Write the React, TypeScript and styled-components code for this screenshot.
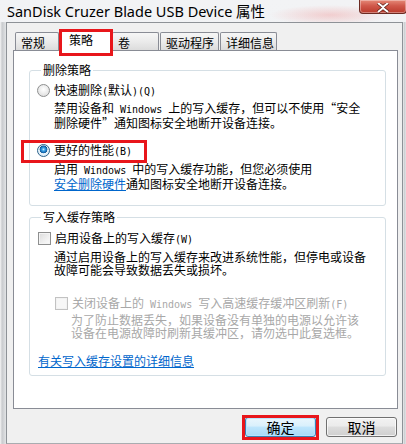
import styled, { createGlobalStyle, css } from 'styled-components';

const GlobalStyle = createGlobalStyle`
  html, body {
    margin: 0;
    padding: 0;
    width: 406px;
    height: 444px;
    overflow: hidden;
    background: #eef0f2;
  }
`;

const CJK = `"Noto Sans CJK SC", "Noto Sans", sans-serif`;

const Window = styled.div`
  width: 406px;
  height: 444px;
  display: flex;
  flex-direction: column;
  background: radial-gradient(ellipse 60px 10px at 330px 15px, rgba(240, 160, 160, 0.45), transparent),
    linear-gradient(180deg, #f2f3f5 0%, #e9ecef 100%);
  overflow: hidden;
  font-family: ${CJK};
`;

const TitleBar = styled.div`
  height: 22px;
  display: flex;
  justify-content: space-between;
  align-items: flex-start;
`;

const Title = styled.div`
  font-family: "Noto Sans", "Noto Sans CJK SC", sans-serif;
  font-size: 14.5px;
  line-height: 20px;
  padding: 1px 0 0 7px;
  color: #000;
  white-space: nowrap;
`;

const CloseButton = styled.div`
  width: 46px;
  height: 13px;
  margin-right: -1px;
  border: 1px solid #6b2a22;
  border-top: none;
  border-radius: 0 0 4px 4px;
  background: linear-gradient(180deg, #e58a78 0%, #d0584a 45%, #b93a2c 100%);
  display: flex;
  align-items: flex-end;
  justify-content: center;
  box-shadow: inset 0 0 0 1px rgba(255, 255, 255, 0.35);
`;

const Frame = styled.div`
  flex: 1;
  display: flex;
`;

const Edge = styled.div<{ $w: number }>`
  width: ${(p) => p.$w}px;
  background: linear-gradient(90deg, #f6f6f6 0%, #c9cbce 35%, #e2e4e6 100%);
`;

const Client = styled.div`
  flex: 1;
  display: flex;
  flex-direction: column;
  background: #f0f0f0;
  border: 1px solid #8e9297;
  border-bottom-color: #a9acb0;
`;

const TabStrip = styled.div`
  margin-top: 6px;
  height: 21px;
  padding-left: 8px;
  display: flex;
  align-items: flex-end;
  gap: 1px;
`;

const Tab = styled.div<{ $width: number; $active?: boolean; $marked?: boolean }>`
  position: relative;
  box-sizing: border-box;
  width: ${(p) => p.$width}px;
  height: 18px;
  padding: 3px 0 0 5px;
  font-size: 12px;
  line-height: 13px;
  color: #000;
  border: 1px solid #898c95;
  border-bottom: none;
  border-radius: 2px 2px 0 0;
  background: linear-gradient(180deg, #f6f6f6 0%, #ebebeb 50%, #dcdcdc 100%);
  white-space: nowrap;

  ${(p) =>
    p.$active &&
    css`
      height: 23px;
      margin-bottom: -2px;
      padding: 3px 0 0 8px;
      background: #fff;
      z-index: 1;
    `}

  ${(p) =>
    p.$marked &&
    css`
      &::after {
        content: '';
        position: absolute;
        left: -2px;
        right: -3px;
        top: -1px;
        bottom: -4px;
        border: 3px solid #e8161b;
      }
    `}
`;

const Panel = styled.div`
  height: 359px;
  box-sizing: border-box;
  margin: 0 4px 0 6px;
  background: #fff;
  border: 1px solid #898c95;
  display: flex;
  flex-direction: column;
`;

const GroupBox = styled.fieldset<{ $top: number; $height: number }>`
  box-sizing: border-box;
  height: ${(p) => p.$height}px;
  margin: ${(p) => p.$top}px 11px 0 15px;
  padding: 0 6px 0 7px;
  border: 1px solid #d5dfe5;
  border-radius: 3px;
  min-width: 0;
`;

const Legend = styled.legend`
  margin-left: 4px;
  padding: 0 2px;
  font-size: 12px;
  line-height: 14px;
  color: #000;
`;

const OptionRow = styled.div<{ $top: number; $indent?: number; $marked?: boolean }>`
  position: relative;
  width: fit-content;
  margin-top: ${(p) => p.$top}px;
  margin-left: ${(p) => p.$indent ?? 0}px;
  display: flex;
  align-items: center;
  gap: 4px;
  height: 13px;

  ${(p) =>
    p.$marked &&
    css`
      &::after {
        content: '';
        position: absolute;
        left: -16px;
        right: -15px;
        top: -4px;
        bottom: -6px;
        border: 3px solid #e8161b;
      }
    `}
`;

const Radio = styled.span<{ $checked?: boolean }>`
  box-sizing: border-box;
  width: 13px;
  height: 13px;
  border-radius: 50%;
  border: 1px solid ${(p) => (p.$checked ? '#2c628b' : '#8e8f8f')};
  background: ${(p) =>
    p.$checked
      ? 'radial-gradient(circle at 50% 40%, #c9efff 0, #3fa3e5 1.5px, #146bb4 3.2px, #0d4f8b 3.6px, #e8f4fb 4.2px, #d2e6f3 100%)'
      : 'radial-gradient(circle at 50% 40%, #ffffff 0, #f2f2f2 35%, #d7d7d7 100%)'};
  flex: none;
`;

const Check = styled.span<{ $disabled?: boolean }>`
  box-sizing: border-box;
  width: 13px;
  height: 13px;
  border: 1px solid ${(p) => (p.$disabled ? '#c2c2c2' : '#8e8f8f')};
  background: ${(p) =>
    p.$disabled
      ? '#f7f7f7'
      : 'linear-gradient(135deg, #dcdcdc 0%, #f0f0f0 60%, #fbfbfb 100%)'};
  box-shadow: inset 0 0 0 1px ${(p) => (p.$disabled ? '#f2f2f2' : '#f4f4f4')};
  flex: none;
`;

const Label = styled.span<{ $disabled?: boolean }>`
  font-size: 12px;
  line-height: 13px;
  white-space: nowrap;
  color: ${(p) => (p.$disabled ? '#a8a8a8' : '#000')};
`;

const Desc = styled.div<{ $top: number; $indent: number; $disabled?: boolean }>`
  margin-top: ${(p) => p.$top}px;
  margin-left: ${(p) => p.$indent}px;
  font-size: 12px;
  line-height: 13px;
  color: ${(p) => (p.$disabled ? '#a8a8a8' : '#000')};
  white-space: nowrap;
`;

const Line = styled.div``;

const Half = styled.span`
  font-family: "DejaVu Sans Mono", "Liberation Mono", monospace;
  font-size: 10px;
  white-space: pre;
`;

const Link = styled.a<{ $top?: number; $indent?: number }>`
  display: ${(p) => (p.$top !== undefined ? 'block' : 'inline')};
  width: fit-content;
  margin-top: ${(p) => p.$top ?? 0}px;
  margin-left: ${(p) => p.$indent ?? 0}px;
  font-size: 12px;
  line-height: 13px;
  color: #0066cc;
  text-decoration: underline;
  cursor: pointer;
`;

const ButtonRow = styled.div`
  margin-top: 8px;
  padding-right: 5px;
  display: flex;
  justify-content: flex-end;
  gap: 10px;
`;

const Button = styled.button<{ $primary?: boolean; $marked?: boolean }>`
  position: relative;
  box-sizing: border-box;
  width: 71px;
  height: 20px;
  padding: 0;
  font-family: ${CJK};
  font-size: 14px;
  line-height: 18px;
  color: #000;
  border-radius: 3px;
  border: 1px solid ${(p) => (p.$primary ? '#3c7fb1' : '#707070')};
  background: ${(p) =>
    p.$primary
      ? 'linear-gradient(180deg, #eaf6fd 0%, #d9f0fc 45%, #bee6fd 50%, #a7d9f5 100%)'
      : 'linear-gradient(180deg, #f2f2f2 0%, #ebebeb 45%, #dddddd 50%, #cfcfcf 100%)'};
  box-shadow: inset 0 0 0 1px ${(p) => (p.$primary ? 'rgba(180, 230, 255, 0.9)' : 'rgba(255, 255, 255, 0.7)')};

  ${(p) =>
    p.$marked &&
    css`
      &::after {
        content: '';
        position: absolute;
        left: -4px;
        right: -4px;
        top: -3px;
        bottom: -4px;
        border: 3px solid #e8161b;
      }
    `}
`;

// wrap half-width (ASCII) runs so they take 6px per char like SimSun
const mixed = (text: string) =>
  text
    .split(/([\x20-\x7e]+)/)
    .filter(Boolean)
    .map((part, i) => (/^[\x20-\x7e]+$/.test(part) ? <Half key={i}>{part}</Half> : part));

const tabs = [
  { label: '常规', width: 44 },
  { label: '策略', width: 51, active: true },
  { label: '卷', width: 47 },
  { label: '驱动程序', width: 59 },
  { label: '详细信息', width: 57 },
];

export default function App() {
  return (
    <>
      <GlobalStyle />
      <Window>
        <TitleBar>
          <Title>SanDisk Cruzer Blade USB Device 属性</Title>
          <CloseButton>
            <svg width="14" height="10" viewBox="0 0 14 10">
              <path
                d="M2 0 L7 4 L12 0 M2 9 L7 5 L12 9"
                stroke="#5a2018"
                strokeWidth="3.4"
                fill="none"
              />
              <path
                d="M2 0 L7 4 L12 0 M2 9 L7 5 L12 9"
                stroke="#fff"
                strokeWidth="2"
                fill="none"
              />
            </svg>
          </CloseButton>
        </TitleBar>
        <Frame>
          <Edge $w={6} />
          <Client>
            <TabStrip>
              {tabs.map((t) => (
                <Tab key={t.label} $width={t.width} $active={t.active} $marked={t.active}>
                  {t.label}
                </Tab>
              ))}
            </TabStrip>
            <Panel>
              <GroupBox $top={12} $height={143}>
                <Legend>删除策略</Legend>
                <OptionRow $top={7}>
                  <Radio />
                  <Label>{mixed('快速删除(默认)(Q)')}</Label>
                </OptionRow>
                <Desc $top={4} $indent={17}>
                  <Line>{mixed('禁用设备和 Windows 上的写入缓存，但可以不使用“安全')}</Line>
                  <Line>{mixed('删除硬件”通知图标安全地断开设备连接。')}</Line>
                </Desc>
                <OptionRow $top={15} $marked>
                  <Radio $checked />
                  <Label>{mixed('更好的性能(B)')}</Label>
                </OptionRow>
                <Desc $top={5} $indent={17}>
                  <Line>{mixed('启用 Windows 中的写入缓存功能，但您必须使用')}</Line>
                  <Line>
                    <Link>安全删除硬件</Link>通知图标安全地断开设备连接。
                  </Line>
                </Desc>
              </GroupBox>
              <GroupBox $top={4} $height={166}>
                <Legend>写入缓存策略</Legend>
                <OptionRow $top={8} $indent={1}>
                  <Check />
                  <Label>{mixed('启用设备上的写入缓存(W)')}</Label>
                </OptionRow>
                <Desc $top={5} $indent={17}>
                  <Line>通过启用设备上的写入缓存来改进系统性能，但停电或设备</Line>
                  <Line>故障可能会导致数据丢失或损坏。</Line>
                </Desc>
                <OptionRow $top={21} $indent={18}>
                  <Check $disabled />
                  <Label $disabled>{mixed('关闭设备上的 Windows 写入高速缓存缓冲区刷新(F)')}</Label>
                </OptionRow>
                <Desc $top={3} $indent={34} $disabled>
                  <Line>为了防止数据丢失，如果设备没有单独的电源以允许该</Line>
                  <Line>设备在电源故障时刷新其缓冲区，请勿选中此复选框。</Line>
                </Desc>
                <Link $top={15} $indent={1}>
                  有关写入缓存设置的详细信息
                </Link>
              </GroupBox>
            </Panel>
            <ButtonRow>
              <Button $primary $marked>
                确定
              </Button>
              <Button>取消</Button>
            </ButtonRow>
          </Client>
          <Edge $w={3} />
        </Frame>
      </Window>
    </>
  );
}
